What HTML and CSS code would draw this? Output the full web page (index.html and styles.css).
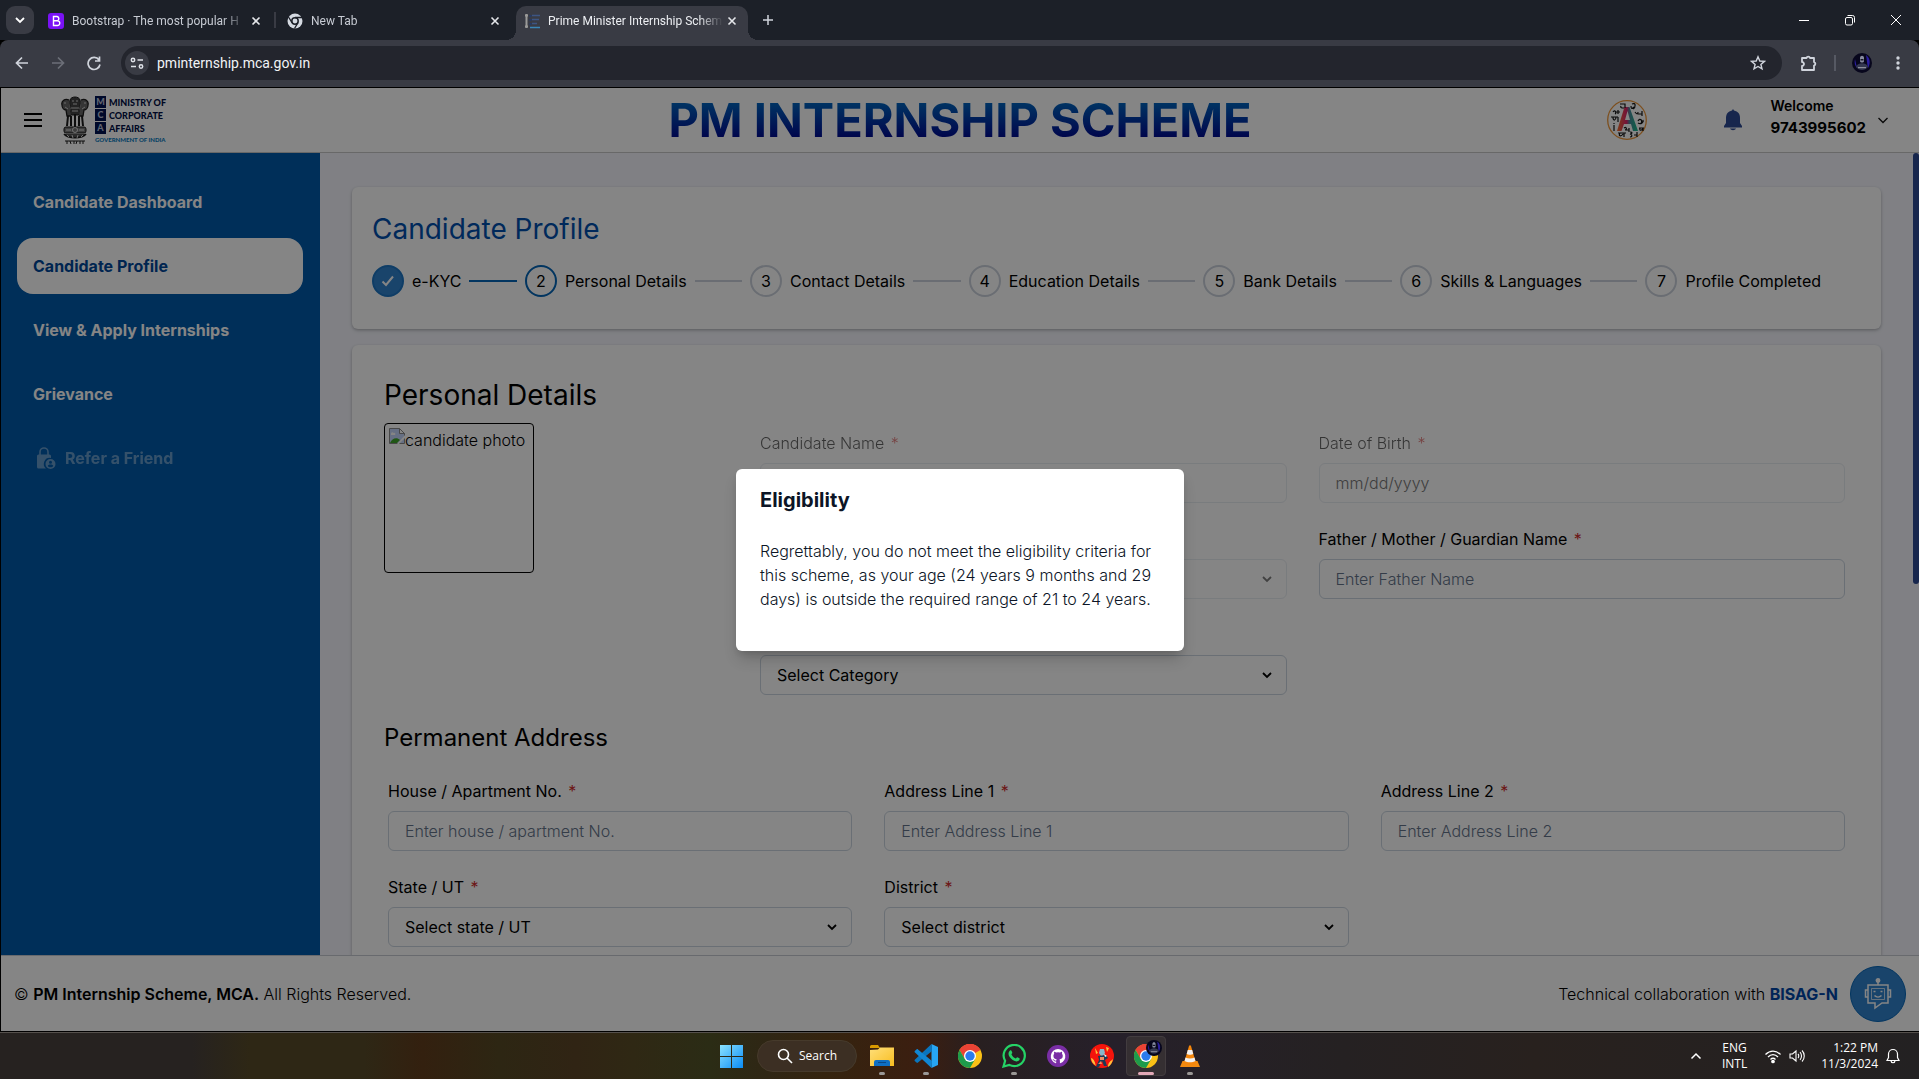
FILE: index.html
```html
<!DOCTYPE html>
<html lang="en">
<head>
<meta charset="utf-8">
<title>Prime Minister Internship Scheme</title>
<link rel="stylesheet" href="styles.css">
</head>
<body>
<svg class="defs" aria-hidden="true">
  <defs>
    <linearGradient id="win" x1="0" y1="0" x2="1" y2="1"><stop offset="0" stop-color="#8be3ff"/><stop offset="1" stop-color="#0a8cf5"/></linearGradient>
    <linearGradient id="folder" x1="0" y1="0" x2="1" y2="1"><stop offset="0" stop-color="#ffdf7a"/><stop offset="1" stop-color="#f8bd20"/></linearGradient>
    <linearGradient id="letter" x1="0" y1="0" x2="1" y2="0"><stop offset="0" stop-color="#f2722c"/><stop offset=".45" stop-color="#e0246c"/><stop offset=".6" stop-color="#4a8a9c"/><stop offset="1" stop-color="#12c08a"/></linearGradient>
    <symbol id="x" viewBox="0 0 10 10"><path d="M1.500 1.500l7 7M8.500 1.500l-7 7" fill="none" stroke="currentColor" stroke-width="1.600"/></symbol>
    <symbol id="down" viewBox="0 0 12 12"><path d="M2 4l4 4 4-4" fill="none" stroke="currentColor" stroke-width="1.800"/></symbol>
    <symbol id="chrome" viewBox="0 0 24 24">
      <circle cx="12" cy="12" r="12" fill="#fbc116"/>
      <path d="M12 12L1.600 6A12 12 0 0 1 22.400 6z" fill="#ea4335"/>
      <path d="M12 6h10.400A12 12 0 0 0 1.600 6l5.200 9z" fill="#ea4335"/>
      <path d="M1.600 6A12 12 0 0 0 12 24l5.200-9L12 17.500 6.800 15z" fill="#1e9b4b"/>
      <circle cx="12" cy="12" r="6" fill="#fff"/><circle cx="12" cy="12" r="4.700" fill="#2b7bee"/>
    </symbol>
    <symbol id="avatar" viewBox="0 0 20 20">
      <circle cx="10" cy="10" r="10" fill="#07061c"/>
      <path d="M14 2c4 3 5 8 2 13-1-4-1-8-2-13zM3 6c-1 4 0 7 2 9z" fill="#2a1ea0"/>
      <path d="M8 5c0-3 4-3 4 0v3c0 2-4 2-4 0z" fill="#878ba0"/><path d="M8.500 6h3v1.500h-3z" fill="#171726"/>
      <path d="M4 14c1-5 11-5 12 0-3 4-9 4-12 0z" fill="#343850"/><path d="M6 14h8v1.200H6z" fill="#8d8f9b"/>
    </symbol>
  </defs>
</svg>

<div class="tabs">
  <button class="tab-search" aria-label="Search tabs"><svg width="12" height="12"><use href="#down"/></svg></button>
  <div class="tab tab-first">
    <svg width="16" height="16" viewBox="0 0 16 16"><rect width="16" height="16" rx="3" fill="#7a12f5"/><path d="M5.500 3.500v9h3.700a2.400 2.400 0 0 0 .3-4.800A2.200 2.200 0 0 0 9 3.500zM5.500 7.700h4" fill="none" stroke="#fff" stroke-width="1.400"/></svg>
    <span class="tab-title">Bootstrap · The most popular H</span>
    <button class="plain" aria-label="Close tab"><svg width="10" height="10"><use href="#x"/></svg></button>
  </div>
  <div class="tab tab-second">
    <svg width="16" height="16" viewBox="0 0 16 16"><circle cx="8" cy="8" r="7.500" fill="#d5dae2"/><circle cx="8" cy="8" r="3.200" fill="#d5dae2" stroke="#1c2028" stroke-width="1.500"/><path d="M8 4.500h7M5 9.700L1.500 4M11 9.700L7.500 15.500" stroke="#1c2028" stroke-width="1.300"/></svg>
    <span class="tab-title">New Tab</span>
    <button class="plain" aria-label="Close tab"><svg width="10" height="10"><use href="#x"/></svg></button>
  </div>
  <div class="tab tab-active">
    <svg width="16" height="16" viewBox="0 0 16 16"><path d="M2.500 1v14M1 2.500h3M1 13.500h3" stroke="#9a9a98" stroke-width="2"/><path d="M5.500 2h2v2h-2zM5.500 6h2v2h-2zM5.500 10h2v2h-2z" fill="#253a66"/><path d="M8 2.500h8M8 6.500h7M8 10.500h5" stroke="#3d5583" stroke-width="1.300"/><path d="M6 14.500h10" stroke="#3a87b8" stroke-width="1.500"/></svg>
    <span class="tab-title">Prime Minister Internship Schem</span>
    <button class="plain" aria-label="Close tab"><svg width="10" height="10"><use href="#x"/></svg></button>
  </div>
  <button class="plain new-tab" aria-label="New tab"><svg width="12" height="12" viewBox="0 0 12 12"><path d="M6 1v10M1 6h10" stroke="#d0d4dc" stroke-width="1.500"/></svg></button>
  <div class="window-buttons">
    <button class="plain" aria-label="Minimize"><svg width="12" height="12" viewBox="0 0 12 12"><path d="M1 6.500h10" stroke="#fff"/></svg></button>
    <button class="plain" aria-label="Restore"><svg width="12" height="12" viewBox="0 0 12 12"><rect x="1.500" y="3.500" width="7" height="7.500" rx="1.500" fill="none" stroke="#fff"/><path d="M3.500 1.500h5a2 2 0 0 1 2 2v5" fill="none" stroke="#fff"/></svg></button>
    <button class="plain" aria-label="Close"><svg width="12" height="12" viewBox="0 0 12 12"><path d="M1 1l10 10M11 1L1 11" stroke="#fff"/></svg></button>
  </div>
</div>

<div class="toolbar">
  <button class="plain nav" aria-label="Back"><svg width="16" height="16" viewBox="0 0 16 16"><path d="M14 8H3M8 2.500L2.500 8 8 13.500" fill="none" stroke="#d0d4dc" stroke-width="1.700"/></svg></button>
  <button class="plain nav" aria-label="Forward"><svg width="16" height="16" viewBox="0 0 16 16"><path d="M2 8h11M8 2.500L13.500 8 8 13.500" fill="none" stroke="#6c6f78" stroke-width="1.700"/></svg></button>
  <button class="plain nav" aria-label="Reload"><svg width="16" height="16" viewBox="0 0 16 16"><path d="M13 5A6 6 0 1 0 14 9.500M13.500 1.500v4.500H9" fill="none" stroke="#d0d4dc" stroke-width="1.700"/></svg></button>
  <div class="omnibox">
    <span class="site-info"><svg width="14" height="14" viewBox="0 0 14 14" fill="none" stroke="#dfe2e8" stroke-width="1.500"><circle cx="3" cy="4" r="1.700"/><path d="M7.500 4H13M1 10.500h5"/><circle cx="11" cy="10.500" r="1.700"/></svg></span>
    <input class="url" aria-label="Address" value="pminternship.mca.gov.in">
    <svg width="16" height="16" viewBox="0 0 16 16"><path d="M8 1.800l1.800 4.200 4.600.4-3.500 3 1.100 4.500L8 11.500l-4 2.400 1.100-4.500-3.500-3 4.600-.4z" fill="none" stroke="#d0d4dc" stroke-width="1.400"/></svg>
  </div>
  <svg class="puzzle" width="18" height="18" viewBox="0 0 18 18"><path d="M2 4h4.500a1.800 1.800 0 0 1 3.500 0H14v4a1.800 1.800 0 0 1 0 3.500V16H2v-4a2 2 0 0 0 0-4z" fill="none" stroke="#d0d4dc" stroke-width="1.800" stroke-linejoin="round"/></svg>
  <span class="divider"></span>
  <svg class="profile" width="20" height="20"><use href="#avatar"/></svg>
  <svg width="16" height="16" viewBox="0 0 16 16" fill="#d0d4dc"><circle cx="8" cy="3" r="1.700"/><circle cx="8" cy="8" r="1.700"/><circle cx="8" cy="13" r="1.700"/></svg>
</div>

<div class="viewport">
  <header class="header">
    <div class="brand">
      <button class="plain menu" aria-label="Menu"><svg width="18" height="16" viewBox="0 0 18 16"><path d="M0 2h18M0 8h18M0 14h18" stroke="#000" stroke-width="2"/></svg></button>
      <div class="logo">
        <svg width="28" height="48" viewBox="0 0 28 48" fill="none" stroke="#1b1b1b">
          <path d="M9 4c1-4 9-4 10 0 1 3 0 6-1 8l1 7H9l1-7C9 10 8 7 9 4z" fill="#444"/>
          <path d="M8 4C4 2 0 5 1 9c0 3 2 5 4 5l1 6h4M20 4c4-2 8 1 7 5 0 3-2 5-4 5l-1 6h-4" fill="#666" stroke-width="1.300"/>
          <path d="M11 5h2m2 0h2M12 8h4M3 7h2m18 0h2M10 12l8 0M11 15h6M4 11l3 2m17-2l-3 2" stroke="#ccc"/>
          <path d="M7 20l-1 10M10 20v10M14 18v13M18 20v10M21 20l1 10" stroke-width="2"/>
          <rect x="3" y="31" width="22" height="6" rx="2" fill="#777"/><circle cx="14" cy="34" r="2.500" stroke="#ddd"/><path d="M5 34h5m8 0h5" stroke="#ddd"/>
          <path d="M3 38c4 5 18 5 22 0" fill="#555" stroke-width="1.500"/><path d="M6 39l2 2m3-2l1 3m4 0l1-3m3 2l2-2" stroke="#ddd"/>
          <path d="M4 45h20M6 45v3m3-3l1 3m3-3v3m3-3l-1 3m4-3v3m3-3v3" stroke-width="1"/>
        </svg>
        <div class="logo-words">
          <div><b>M</b>MINISTRY OF</div>
          <div><b>C</b>CORPORATE</div>
          <div><b>A</b>AFFAIRS</div>
          <small>GOVERNMENT OF INDIA</small>
        </div>
      </div>
    </div>
    <h1>PM INTERNSHIP SCHEME</h1>
    <div class="account">
      <svg class="language" width="40" height="40" viewBox="0 0 40 40" fill="none">
        <circle cx="20" cy="20" r="19.300" stroke="#f0983a" stroke-width="1.300"/>
        <path d="M10 31L17.500 7h5L31 31h-5l-2-7h-7l-2.500 7zM18 20h5l-2.500-9z" fill="url(#letter)" fill-rule="evenodd"/>
        <path d="M13 4h5v4m-4-2c-1 2 1 2 3 2M25 4c4-2 4 3 1 5m-2-3c0 3 1 3 3 1M6 12c2-3 4 1 2 2m0-2h5m-2-2v4M4 17h7m-5 0c0 5 3 3 3 0m2 0v5M28 12c2 3 3 2 3 0m0 2h4m0-3v5M31 21c2-4 5 0 3 2m-3 0c3 2 6-1 5-3M7 25v6m0-8v1M11 33h8m-6 0c-2 3 1 4 3 1m1-1v4M23 32c3 0 2 2 0 2 3 1 2 3 0 3m4-2h3m0-3v5M32 28h5m-4 0c-1 3 2 3 3 0v3M17 28c3-2 3 2 1 2m4-2v4m0-2h-4" stroke="#141414" stroke-width="1.200"/>
      </svg>
      <svg class="bell" width="18" height="22" viewBox="0 0 18 22" fill="#2d4a95"><path d="M9 0l1 1.500c4 .8 6 3.500 6 7.500v5l2 3v1.500H0V17l2-3V9c0-4 2-6.700 6-7.500zM6 19.500h6c-1 2.300-5 2.300-6 0z"/></svg>
      <div class="user"><span>Welcome</span><strong>9743995602</strong></div>
      <svg class="user-arrow" width="12" height="12" viewBox="0 0 12 12"><path d="M1.500 4L6 8.500 10.500 4" fill="none" stroke="#111" stroke-width="1.300"/></svg>
    </div>
  </header>

  <div class="body">
    <nav class="sidebar">
      <a href="#dashboard">Candidate Dashboard</a>
      <a href="#profile" class="current">Candidate Profile</a>
      <a href="#internships">View &amp; Apply Internships</a>
      <a href="#grievance">Grievance</a>
      <a href="#refer" class="locked"><svg width="24" height="24" viewBox="0 0 24 24"><path d="M7 9V6a4 4 0 0 1 8 0v3" fill="none" stroke="#fff" stroke-width="1.600"/><path d="M4 10a1.500 1.500 0 0 1 1.500-1.500h11A1.500 1.500 0 0 1 18 10v2a6 6 0 0 0-5 10.500H5.500A1.500 1.500 0 0 1 4 21z" fill="#fff"/><path fill-rule="evenodd" d="M17.500 13a5 5 0 1 1 0 10 5 5 0 0 1 0-10zm0 1.700a1.500 1.500 0 1 0 0 3 1.500 1.500 0 0 0 0-3zm-2.800 5c1 2 4.600 2 5.600 0-1-1.600-4.600-1.600-5.600 0z" fill="#fff"/></svg>Refer a Friend</a>
    </nav>
    <main class="main">
      <section class="card steps-card">
        <h2 class="title">Candidate Profile</h2>
        <ol class="steps">
          <li class="done"><i><svg width="14" height="14" viewBox="0 0 14 14"><path d="M1.500 7.500L5 11l7-8.500" fill="none" stroke="#fff" stroke-width="2"/></svg></i>e-KYC</li>
          <li class="now"><i>2</i>Personal Details</li>
          <li><i>3</i>Contact Details</li>
          <li><i>4</i>Education Details</li>
          <li><i>5</i>Bank Details</li>
          <li><i>6</i>Skills &amp; Languages</li>
          <li><i>7</i>Profile Completed</li>
        </ol>
      </section>

      <section class="card form-card">
        <h2>Personal Details</h2>
        <div class="personal">
          <div class="photo"><svg width="16" height="16" viewBox="0 0 16 16"><path d="M.5.500h10l5 5v10H.5z" fill="#c3d5fb" stroke="#8a8a8a"/><path d="M10.500.500v5h5z" fill="#fff" stroke="#8a8a8a"/><path d="M2 6c0-2 2-2 2.500-1C6 4 7 6 6 7H2z" fill="#fff"/><path d="M1 15c2-5 7-6 10-3l-3 3z" fill="#3fa52a"/><path d="M16 7v3l-6 6H8z" fill="#fff"/></svg>candidate photo</div>
          <div class="field disabled"><label for="name">Candidate Name <em>*</em></label><input id="name" disabled></div>
          <div class="field disabled"><label for="dob">Date of Birth <em>*</em></label><input id="dob" placeholder="mm/dd/yyyy" disabled></div>
          <div class="field disabled second-column"><div class="select"><select aria-label="Gender" disabled><option></option></select><svg width="12" height="12"><use href="#down"/></svg></div></div>
          <div class="field"><label for="father">Father / Mother / Guardian Name <em>*</em></label><input id="father" placeholder="Enter Father Name"></div>
          <div class="field second-column"><div class="select"><select aria-label="Category"><option>Select Category</option></select><svg width="12" height="12"><use href="#down"/></svg></div></div>
        </div>
        <h3>Permanent Address</h3>
        <div class="address">
          <div class="field"><label for="house">House / Apartment No. <em>*</em></label><input id="house" placeholder="Enter house / apartment No."></div>
          <div class="field"><label for="line1">Address Line 1 <em>*</em></label><input id="line1" placeholder="Enter Address Line 1"></div>
          <div class="field"><label for="line2">Address Line 2 <em>*</em></label><input id="line2" placeholder="Enter Address Line 2"></div>
          <div class="field"><label for="state">State / UT <em>*</em></label><div class="select"><select id="state"><option>Select state / UT</option></select><svg width="12" height="12"><use href="#down"/></svg></div></div>
          <div class="field"><label for="district">District <em>*</em></label><div class="select"><select id="district"><option>Select district</option></select><svg width="12" height="12"><use href="#down"/></svg></div></div>
        </div>
      </section>
      <span class="scroll-thumb"></span>
    </main>
  </div>

  <footer class="footer">
    <p>© <strong>PM Internship Scheme, MCA.</strong> All Rights Reserved.</p>
    <p class="credit">Technical collaboration with <a href="#bisag">BISAG-N</a></p>
    <button class="bot" aria-label="Chat assistant"><svg width="28" height="32" viewBox="0 0 28 32" fill="none" stroke="#fff" stroke-width="1.500"><circle cx="14" cy="2.500" r="1.700" fill="#fff"/><path d="M14 4v3M4 7h20v18h-6l-7 5v-5H4z"/><path d="M4 12H1.500v7H4M24 12h2.500v7H24"/><path d="M7.500 10.500h13v11h-13z" stroke-width=".7"/><path d="M9.500 13.500h2m5 0h2M10.500 17.500c2 2 5 2 7 0"/></svg></button>
  </footer>

  <div class="overlay">
    <div class="dialog" role="dialog" aria-labelledby="dialog-title">
      <h2 id="dialog-title">Eligibility</h2>
      <p>Regrettably, you do not meet the eligibility criteria for this scheme, as your age (24 years 9 months and 29 days) is outside the required range of 21 to 24 years.</p>
    </div>
  </div>
</div>

<div class="taskbar">
  <div class="apps">
    <button class="app" aria-label="Start"><svg width="23" height="23" viewBox="0 0 23 23"><path d="M0 0h11v11H0zM12 0h11v11H12zM0 12h11v11H0zM12 12h11v11H12z" fill="url(#win)"/></svg></button>
    <button class="search"><svg width="16" height="16" viewBox="0 0 16 16"><circle cx="6.500" cy="6.500" r="5" fill="none" stroke="#fff" stroke-width="1.600"/><path d="M10 10l5 5" stroke="#fff" stroke-width="1.600"/></svg>Search</button>
    <button class="app open" aria-label="File Explorer"><svg width="24" height="22" viewBox="0 0 24 22"><path d="M0 1.500A1.500 1.500 0 0 1 1.500 0H8l2 3H0z" fill="#d99a00"/><path d="M0 5l8-.5 2-2h14V21H0z" fill="url(#folder)"/><path d="M4 21v-4a2 2 0 0 1 2-2h12a2 2 0 0 1 2 2v4z" fill="#0f6fc4"/><path d="M8 17.500h8" stroke="#08498a"/></svg></button>
    <button class="app open" aria-label="Visual Studio Code"><svg width="24" height="24" viewBox="0 0 24 24"><path d="M17.500 0L24 3v18l-6.500 3z" fill="#27a5f3"/><path d="M17.500 0L1 15.500c-.6.600-.6 1.300 0 1.800l1.500 1.300c.5.400 1 .4 1.500 0L18 7z" fill="#0a75bd"/><path d="M17.500 24L1 8.500C.4 8 .4 7.200 1 6.700l1.500-1.300c.5-.4 1-.4 1.500 0L18 17z" fill="#1186d2"/></svg></button>
    <button class="app" aria-label="Chrome"><svg width="24" height="24"><use href="#chrome"/></svg></button>
    <button class="app open" aria-label="WhatsApp"><svg width="24" height="24" viewBox="0 0 24 24"><path d="M1.500 22.500l1.600-5.600a10.600 10.600 0 1 1 4.200 4z" fill="none" stroke="#25d366" stroke-width="2.200"/><path d="M8 6.500c.6-.5 1.300-.3 1.500.2l.8 2c.2.500-.9 1.400-.8 1.700 1 2 2.200 3.100 4.200 4 .4.200 1.200-1.300 1.700-1.100l2 1c.5.300.3 1.700-.4 2.300-1.400 1.200-3.800 1.100-6.300-.6-2.500-1.800-4.100-4-4.200-6 0-1.500.6-2.700 1.500-3.500z" fill="#25d366"/></svg></button>
    <button class="app" aria-label="GitHub"><svg width="22" height="22" viewBox="0 0 22 22"><circle cx="11" cy="11" r="11" fill="#7a2ea5"/><path fill="#fff" d="M11 4a7.300 7.300 0 0 0-2.300 14.200c.4 0 .5-.1.500-.4v-1.400c-2 .5-2.500-.9-2.500-.9-.3-.8-.8-1-.8-1-.7-.5 0-.5 0-.5.8.1 1.200.8 1.200.8.700 1.200 1.800.9 2.200.7 0-.5.2-.9.500-1.100-1.700-.2-3.400-.8-3.400-3.600 0-.8.300-1.500.8-2 0-.2-.3-1 0-2 0 0 .7-.2 2 .8a7 7 0 0 1 3.700 0c1.400-1 2-.8 2-.8.400 1 .200 1.800.1 2 .5.500.8 1.200.8 2 0 2.800-1.700 3.400-3.400 3.600.3.200.5.700.5 1.400v2c0 .3.200.4.500.4A7.300 7.300 0 0 0 11 4z"/></svg></button>
    <button class="app" aria-label="Game"><svg width="24" height="24" viewBox="0 0 24 24"><circle cx="12" cy="12" r="12" fill="#f4140c"/><path d="M1 14c4 1 4 6 5 8-3-2-5-5-5-8zm17 9c0-5 3-6 5-8-1 4-2 6-5 8zM5 4l3 5-2 1zM16 3l1 5 2-4z" fill="#ffc23a"/><path d="M10 5h4l1 4-2 3h-2l-2-3z" fill="#8ab6c8"/><path d="M8 12l8-1 2 3-3 2 2 6h-3l-2-5-3 6H6l3-7z" fill="#1b3a55"/><path d="M10 13h4v3h-4zM8 20l3-3 1 3z" fill="#f08a62"/><path d="M14 10l3 2-2 1z" fill="#fff"/></svg></button>
    <button class="app active" aria-label="Chrome profile"><svg width="24" height="24"><use href="#chrome"/></svg><svg class="badge" width="16" height="16"><use href="#avatar"/></svg></button>
    <button class="app open" aria-label="VLC"><svg width="20" height="22" viewBox="0 0 20 22"><path d="M2.500 16h15l2.500 6H0z" fill="#f28a10"/><path d="M9 1c.3-1 1.700-1 2 0l5 17c-2 2.500-10 2.500-12 0z" fill="#f4860c"/><path d="M7.800 5h4.400l1 4c-1.500 1-5 1-6.500 0zM5.500 12.500c2.500 1.300 6.500 1.300 9 0l1 3.500c-3 1.700-8 1.700-11 0z" fill="#f2f2f2"/></svg></button>
  </div>
  <div class="tray">
    <svg class="tray-up" width="12" height="12" viewBox="0 0 12 12"><path d="M1.500 8.500L6 4l4.500 4.500" fill="none" stroke="#fff" stroke-width="1.500"/></svg>
    <div class="lang">ENG<br>INTL</div>
    <svg width="16" height="16" viewBox="0 0 16 16" fill="none" stroke="#fff" stroke-width="1.300"><path d="M.5 6.500c4.500-4.600 10.500-4.600 15 0M3 9c3-3.200 7-3.200 10 0M5.500 11.500c1.600-1.700 3.400-1.700 5 0"/><circle cx="8" cy="13.500" r="1.200" fill="#fff"/></svg>
    <svg width="16" height="16" viewBox="0 0 16 16" fill="none" stroke="#fff" stroke-width="1.100"><path d="M1 6v4h2.500L7 13V3L3.500 6zM9 6c1 1 1 3 0 4M11 4.200c2 2 2 5.600 0 7.600M13 2.500c3 3 3 8 0 11"/></svg>
    <div class="clock">1:22 PM<br>11/3/2024</div>
    <svg width="14" height="16" viewBox="0 0 14 16" fill="none" stroke="#fff" stroke-width="1.200"><path d="M1 12.500l1.500-3V6a4.500 4.500 0 0 1 9 0v3.500l1.500 3zM5 13c.5 2.300 3.500 2.300 4 0"/></svg>
  </div>
</div>
</body>
</html>
```
FILE: styles.css
```css
* { box-sizing: border-box; }

body {
  margin: 0;
  height: 100vh;
  display: flex;
  flex-direction: column;
  overflow: hidden;
  background: #000;
  color: #000;
  font: 16px/24px Inter, sans-serif;
}

h1, h2, h3, p, ol { margin: 0; padding: 0; }
h2, h3 { font-weight: 400; }
a { color: inherit; text-decoration: none; }
button, input, select { font: inherit; color: inherit; margin: 0; }
svg { display: block; flex: none; }
.defs { position: absolute; width: 0; height: 0; }
.plain { display: grid; place-items: center; border: 0; padding: 0; background: none; color: #e4e6ea; }

/* Browser tabs */
.tabs {
  flex: none;
  height: 40px;
  display: flex;
  align-items: center;
  padding-left: 6px;
  background: #1c2028;
  color: #c7cbd3;
  font: 12px/16px Roboto, sans-serif;
}
.tab-search {
  width: 28px;
  height: 28px;
  display: grid;
  place-items: center;
  padding: 0;
  border: 0;
  border-radius: 9px;
  background: #393b44;
  color: #fff;
}
.tab {
  position: relative;
  width: 232px;
  height: 34px;
  align-self: flex-end;
  display: flex;
  align-items: center;
  gap: 8px;
  padding: 0 11px 5px 8px;
}
.tab-first { margin: 0 7px 0 6px; }
.tab-first::after { content: ""; position: absolute; right: -4px; top: 6px; width: 2px; height: 16px; background: #393b44; }
.tab-second { margin-right: 5px; }
.tab-title {
  flex: 1;
  margin-right: -4px;
  overflow: hidden;
  white-space: nowrap;
  -webkit-mask: linear-gradient(90deg, #000 86%, transparent);
  mask: linear-gradient(90deg, #000 86%, transparent);
}
.tab-active { background: #393b44; border-radius: 10px 10px 0 0; color: #eceef2; }
.tab-active::before, .tab-active::after {
  content: "";
  position: absolute;
  bottom: 0;
  width: 10px;
  height: 10px;
  background: radial-gradient(circle at 0 0, transparent 10px, #393b44 10px);
}
.tab-active::before { left: -10px; }
.tab-active::after { right: -10px; transform: scaleX(-1); }
.new-tab { margin-left: 14px; }
.window-buttons { margin-left: auto; display: flex; }
.window-buttons .plain { width: 46px; height: 40px; }

/* Browser toolbar */
.toolbar {
  flex: none;
  height: 47px;
  display: flex;
  align-items: center;
  padding: 0 13px 1px 4px;
  background: #393b44;
  border-radius: 8px 8px 0 0;
  font: 14px/20px Roboto, sans-serif;
}
.nav { width: 36px; height: 36px; }
.omnibox {
  flex: 1;
  height: 34px;
  display: flex;
  align-items: center;
  margin-left: 9px;
  padding: 0 16px 0 4px;
  border-radius: 17px;
  background: #23252d;
}
.site-info { width: 24px; height: 24px; display: grid; place-items: center; border-radius: 50%; background: #393b44; }
.url { flex: 1; padding: 0 8px; border: 0; background: none; color: #f1f3f6; outline: none; }
.puzzle { margin-left: 18px; }
.divider { width: 2px; height: 16px; margin: 0 16px; background: #565963; }
.profile { margin-right: 18px; }

/* Web page */
.viewport {
  position: relative;
  flex: 1;
  min-height: 0;
  display: flex;
  flex-direction: column;
  margin: 1px 0 1px 1px;
  background: #fff;
}
.header {
  flex: none;
  height: 65px;
  display: grid;
  grid-template-columns: 1fr auto 1fr;
  align-items: center;
  padding: 0 23px;
  border-bottom: 1px solid #c8c8c8;
}
.brand { display: flex; align-items: center; gap: 19px; }
.menu { width: 18px; }
.logo { display: flex; gap: 6px; }
.logo-words { color: #000e44; font: 900 9px/13px Lato, sans-serif; }
.logo-words div { display: flex; gap: 3px; }
.logo-words b { flex: none; width: 11px; height: 12px; line-height: 12px; text-align: center; background: #001252; color: #bcc4dc; }
.logo-words small { display: block; color: #0a7cc0; font: 900 6px/9px Lato, sans-serif; }
h1 {
  background: linear-gradient(#0068c0 20%, #000890 80%);
  -webkit-background-clip: text;
  background-clip: text;
  color: transparent;
  font-weight: 700;
  font-size: 47px;
  line-height: 64px;
}
.account { display: flex; align-items: center; justify-content: flex-end; }
.bell { margin: 0 28px 0 77px; }
.user { display: flex; flex-direction: column; padding-bottom: 6px; font-weight: 600; font-size: 14px; line-height: 22px; }
.user strong { font-size: 15px; font-weight: 700; }
.user-arrow { margin: 0 7px 0 11px; }

.body { flex: 1; min-height: 0; display: flex; overflow: hidden; }
.sidebar {
  flex: none;
  width: 319px;
  display: flex;
  flex-direction: column;
  gap: 8px;
  padding: 21px 17px 21px 16px;
  background: #005aab;
  color: #fff;
  font-weight: 700;
}
.sidebar a { height: 56px; display: flex; align-items: center; gap: 8px; padding: 0 16px; border-radius: 16px; }
.sidebar .current { background: #fff; color: #00479a; }
.sidebar .locked { opacity: .4; }

.main { position: relative; flex: 1; min-width: 0; padding: 34px 38px 0 32px; background: #f5f6fd; }
.card { background: #fff; border-radius: 6px; box-shadow: 0 1px 3px rgba(0, 0, 0, .2), 0 2px 4px rgba(0, 0, 0, .1); }
.steps-card { height: 142px; padding: 21px 20px 20px; margin-bottom: 16px; }
h2 { font-size: 28px; line-height: 42px; }
.title { color: #0050ae; }

.steps { display: flex; list-style: none; padding: 15px 40px 0 0; }
.steps li { display: flex; align-items: center; gap: 8px; flex: 1 0 auto; margin-right: 8px; white-space: nowrap; }
.steps li:last-child { flex: none; margin: 0; }
.steps li:not(:last-child)::after { content: ""; flex: 1; height: 2px; background: #cbd2dc; }
.steps li.done::after { background: #0466b8; }
.steps i {
  width: 32px;
  height: 32px;
  display: grid;
  place-items: center;
  border: 2px solid #cbd2dc;
  border-radius: 50%;
  font-style: normal;
}
.steps .done i { background: #3182ce; border-color: #1d76c4; }
.steps .now i { border-color: #0466b8; }

.form-card { padding: 29px 36px 40px 32px; min-height: 900px; }
.personal { display: grid; grid-template-columns: 344px 1fr 1fr; gap: 25px 32px; padding-top: 16px; }
.photo {
  grid-row: 1 / 4;
  align-self: start;
  width: 150px;
  height: 150px;
  display: flex;
  padding: 4px;
  margin-top: -9px;
  border: 1px solid #000;
  border-radius: 4px;
  font-weight: 300;
  white-space: nowrap;
}
.second-column { grid-column: 2; padding-top: 31px; }
.field label { display: block; height: 24px; margin-bottom: 7px; line-height: 22px; }
.field em { margin-left: 2px; color: #d02c2c; font-style: normal; }
.field input, .field select {
  width: 100%;
  height: 40px;
  display: block;
  padding: 0 16px;
  border: 1px solid #cbd5e0;
  border-radius: 6px;
  background: none;
  appearance: none;
  opacity: 1;
}
.field input::placeholder { color: #64748b; opacity: 1; font-weight: 300; }
.field select { color: #000; }
.disabled label { opacity: .6; font-weight: 300; }
.field.disabled input, .field.disabled select { border-color: #e9edf2; }
.field.disabled input::placeholder { color: #777; }
.disabled svg { opacity: .5; }
.select { position: relative; }
.select svg { position: absolute; right: 14px; top: 14px; }
h3 { font-size: 24px; line-height: 36px; padding-top: 25px; }
.address { display: grid; grid-template-columns: repeat(3, 1fr); gap: 25px 32px; padding: 24px 0 0 4px; }

.scroll-thumb { position: absolute; top: 0; right: 0; width: 6px; height: 431px; border-radius: 3px; background: #2d4a95; }

.footer {
  flex: none;
  height: 76px;
  display: flex;
  align-items: center;
  padding: 0 13px;
  border-top: 1px solid #c8ccd4;
  background: #fff;
  font-weight: 300;
}
.footer strong { font-weight: 600; }
.credit { margin-left: auto; }
.credit a { color: #0046a8; font-weight: 700; }
.bot { width: 56px; height: 56px; display: grid; place-items: center; margin-left: 12px; padding: 0; border: 1px solid #0466b8; border-radius: 50%; background: #3182ce; }

.overlay {
  position: absolute;
  inset: 0;
  display: grid;
  place-items: center;
  background: rgba(0, 0, 0, .48);
}
.dialog {
  width: 448px;
  padding: 16px 24px 40px;
  border-radius: 6px;
  background: #fff;
  color: #0c1526;
  font-weight: 300;
  box-shadow: 0 10px 15px -3px rgba(0, 0, 0, .2), 0 4px 6px -2px rgba(0, 0, 0, .1);
}
.dialog h2 { font-size: 20px; line-height: 30px; font-weight: 700; margin-bottom: 24px; }

/* Windows taskbar */
.taskbar {
  flex: none;
  height: 47px;
  display: grid;
  grid-template-columns: 1fr auto 1fr;
  align-items: center;
  border-top: 1px solid #55504c;
  background: linear-gradient(90deg, #262220 0 10%, #2e2715 13% 19%, #33200f 22%, #2d2613 26%, #302414 30%, #2f2814 33%, #2b2c15 37%, #2f2614 40%, #35240f 43%, #3b1e10 48%, #281f20 51%, #26202a 58%, #252122 70%, #28211e 80%, #232122);
  color: #fff;
  font: 12px/16px "Open Sans", sans-serif;
}
.apps { grid-column: 2; display: flex; align-items: center; padding-left: 2px; }
.app { position: relative; width: 44px; height: 46px; display: grid; place-items: center; padding: 0; border: 0; background: none; }
.app.open::after, .app.active::after {
  content: "";
  position: absolute;
  left: 19px;
  bottom: 4px;
  width: 6px;
  height: 3px;
  border-radius: 2px;
  background: #9b9896;
}
.app.active { width: 40px; height: 40px; margin: 0 2px; border: 1px solid #423c3f; border-radius: 4px; background: #352f32; }
.app.active::after { left: 11px; bottom: 0; width: 16px; background: #e3a9b8; }
.badge { position: absolute; right: 3px; top: 3px; }
.search {
  width: 100px;
  height: 32px;
  display: flex;
  align-items: center;
  justify-content: center;
  gap: 6px;
  margin: 0 3px 0 4px;
  padding: 0;
  border: 1px solid #463a2b;
  border-radius: 16px;
  background: #3c2f23;
  color: #fff;
}
.tray { display: flex; align-items: center; justify-content: flex-end; gap: 8px; padding-right: 19px; }
.tray-up { margin-right: 12px; }
.lang { text-align: center; margin-right: 10px; }
.clock { text-align: right; margin-left: 8px; }
```
